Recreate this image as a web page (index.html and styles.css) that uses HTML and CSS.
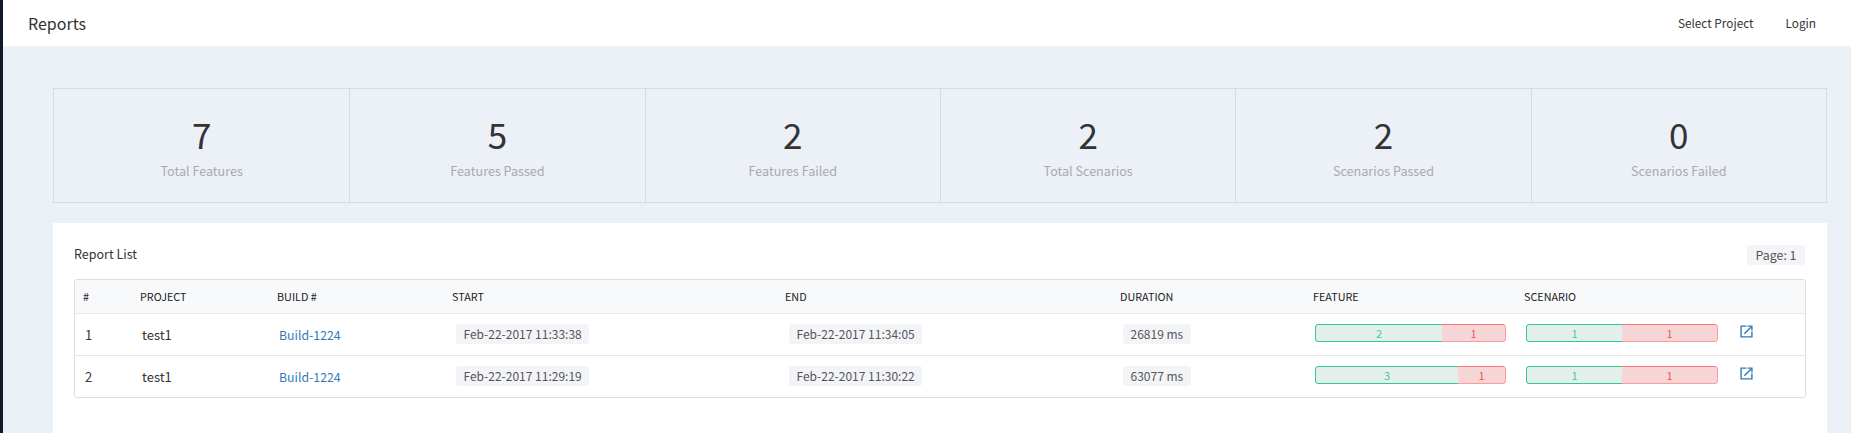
FILE: index.html
```html
<!DOCTYPE html>
<html lang="en">
<head>
<meta charset="utf-8">
<title>Reports</title>
<link rel="stylesheet" href="styles.css">
</head>
<body>
<div class="shell">
  <aside class="strip"></aside>
  <div class="main">
    <header class="topbar">
      <div class="brand">Reports</div>
      <nav class="nav"><a href="#">Select Project</a><a href="#">Login</a></nav>
    </header>
    <div class="content">
      <section class="stats">
        <div class="stat"><div class="num">7</div><div class="lbl">Total Features</div></div>
        <div class="stat"><div class="num">5</div><div class="lbl">Features Passed</div></div>
        <div class="stat"><div class="num">2</div><div class="lbl">Features Failed</div></div>
        <div class="stat"><div class="num">2</div><div class="lbl">Total Scenarios</div></div>
        <div class="stat"><div class="num">2</div><div class="lbl">Scenarios Passed</div></div>
        <div class="stat"><div class="num">0</div><div class="lbl">Scenarios Failed</div></div>
      </section>
      <section class="card">
        <div class="card-head"><span class="title">Report List</span><span class="tag">Page: 1</span></div>
        <div class="table-wrap">
          <table class="table">
            <colgroup>
              <col class="c-num"><col class="c-project"><col class="c-build"><col class="c-start"><col class="c-end"><col class="c-dur"><col class="c-feat"><col class="c-scen"><col class="c-act">
            </colgroup>
            <thead>
              <tr><th>#</th><th>PROJECT</th><th>BUILD #</th><th>START</th><th>END</th><th>DURATION</th><th>FEATURE</th><th>SCENARIO</th><th></th></tr>
            </thead>
            <tbody>
              <tr>
                <td>1</td><td>test1</td><td><a class="link" href="#">Build-1224</a></td>
                <td><span class="tag">Feb-22-2017 11:33:38</span></td>
                <td><span class="tag">Feb-22-2017 11:34:05</span></td>
                <td><span class="tag tag-dur">26819 ms</span></td>
                <td><div class="bar"><span class="pass" style="width:66.67%">2</span><span class="fail" style="width:33.33%">1</span></div></td>
                <td><div class="bar"><span class="pass" style="width:50%">1</span><span class="fail" style="width:50%">1</span></div></td>
                <td class="act"><a href="#" class="ext" aria-label="Open"><svg viewBox="0 0 12 12" width="13" height="13"><path d="M6 1H1v10h10V6" fill="none" stroke="#337ab7" stroke-width="1.3"/><path d="M4 8 10 2M7 1h4v4" fill="none" stroke="#337ab7" stroke-width="1.3"/></svg></a></td>
              </tr>
              <tr>
                <td>2</td><td>test1</td><td><a class="link" href="#">Build-1224</a></td>
                <td><span class="tag">Feb-22-2017 11:29:19</span></td>
                <td><span class="tag">Feb-22-2017 11:30:22</span></td>
                <td><span class="tag tag-dur">63077 ms</span></td>
                <td><div class="bar"><span class="pass" style="width:75%">3</span><span class="fail" style="width:25%">1</span></div></td>
                <td><div class="bar"><span class="pass" style="width:50%">1</span><span class="fail" style="width:50%">1</span></div></td>
                <td class="act"><a href="#" class="ext" aria-label="Open"><svg viewBox="0 0 12 12" width="13" height="13"><path d="M6 1H1v10h10V6" fill="none" stroke="#337ab7" stroke-width="1.3"/><path d="M4 8 10 2M7 1h4v4" fill="none" stroke="#337ab7" stroke-width="1.3"/></svg></a></td>
              </tr>
            </tbody>
          </table>
        </div>
      </section>
    </div>
  </div>
</div>
</body>
</html>
```
FILE: styles.css
```css
* { box-sizing: border-box; }
html, body { margin: 0; padding: 0; height: 100%; }
body {
  font-family: "Noto Sans CJK SC", "Noto Sans", sans-serif;
  font-size: 13px;
  color: #333;
  background: #ecf0f7;
  overflow: hidden;
}
a { text-decoration: none; color: inherit; }
.shell { display: flex; height: 100vh; }
.strip { width: 3px; flex: none; background: #111a26; }
.main { flex: 1; min-width: 0; display: flex; flex-direction: column; }

.topbar {
  height: 46px;
  flex: none;
  background: #fff;
  display: flex;
  align-items: center;
  justify-content: space-between;
  padding: 0 35px 0 25px;
}
.brand { font-size: 16px; line-height: 46px; color: #333; }
.nav { display: flex; gap: 32px; font-size: 11.8px; color: #333; margin-top: -2px; }

.content {
  flex: 1;
  min-height: 0;
  display: flex;
  flex-direction: column;
  padding: 42px 24px 0 50px;
}

.stats {
  display: grid;
  grid-template-columns: repeat(6, 1fr);
  height: 115px;
  border: 1px solid #d5dbe5;
  flex: none;
}
.stat {
  display: flex;
  flex-direction: column;
  align-items: center;
  padding-top: 26px;
  border-left: 1px solid #d5dbe5;
}
.stat:first-child { border-left: 0; }
.num { font-size: 35px; line-height: 38px; color: #333; }
.lbl { font-size: 12.6px; line-height: 20px; margin-top: 8px; color: #aaa; }

.card {
  flex: 1;
  margin-top: 20px;
  background: #fff;
  padding: 22px 21px 0 21px;
}
.card-head {
  display: flex;
  justify-content: space-between;
  align-items: center;
  height: 20px;
  margin-bottom: 14px;
}
.title { font-size: 12.5px; line-height: 18px; color: #333; margin-top: -2px; }
.tag {
  display: inline-block;
  background: #f3f4f8;
  border-radius: 3px;
  padding: 0 8px;
  height: 20px;
  line-height: 20px;
  font-size: 12px;
  color: #555;
}
.card-head .tag { padding: 0 8.5px; font-size: 12.4px; margin-right: 1px; }
td .tag { margin-left: 2px; padding: 0 7.5px; }
td .tag-dur { margin-left: 1px; }

.table-wrap {
  border: 1px solid #ddd;
  border-radius: 3px;
  overflow: hidden;
}
.table { width: 100%; border-collapse: collapse; table-layout: fixed; }
.c-num { width: 57px; }
.c-project { width: 137px; }
.c-build { width: 175px; }
.c-start { width: 333px; }
.c-end { width: 335px; }
.c-dur { width: 193px; }
.c-feat { width: 211px; }
.c-scen { width: 216px; }
th {
  height: 33px;
  background: #f8f9fb;
  border-bottom: 1px solid #e8e8e8;
  font-size: 10.8px;
  font-weight: 400;
  text-align: left;
  padding: 0 0 0 8px;
  color: #222;
}
td {
  height: 42px;
  padding: 0 0 0 10px;
  border-bottom: 1px solid #e8e8e8;
  font-size: 13px;
  color: #333;
  vertical-align: middle;
}
tbody tr:last-child td { border-bottom: 0; height: 42px; }
.link { color: #337ab7; font-size: 12.3px; }
.bar {
  display: flex;
  width: 191px;
  height: 18px;
  border-radius: 3px;
  overflow: hidden;
  margin-top: -3px;
  font-size: 11px;
  line-height: 16px;
  text-align: center;
}
td:nth-child(8) .bar { width: 192px; }
.pass {
  background: #e3efed;
  color: #4fc49a;
  border: 1px solid #2ecc94;
  border-right: 0;
  border-radius: 3px 0 0 3px;
}
.fail {
  background: #f6d5d7;
  color: #ea5a5a;
  border: 1px solid #ff9a9d;
  border-top-color: #ff7477;
  border-left: 0;
  border-radius: 0 3px 3px 0;
}
.act { padding-left: 8px; }
.ext { display: block; width: 13px; height: 13px; margin-top: -6px; }
.ext svg { display: block; }
```
